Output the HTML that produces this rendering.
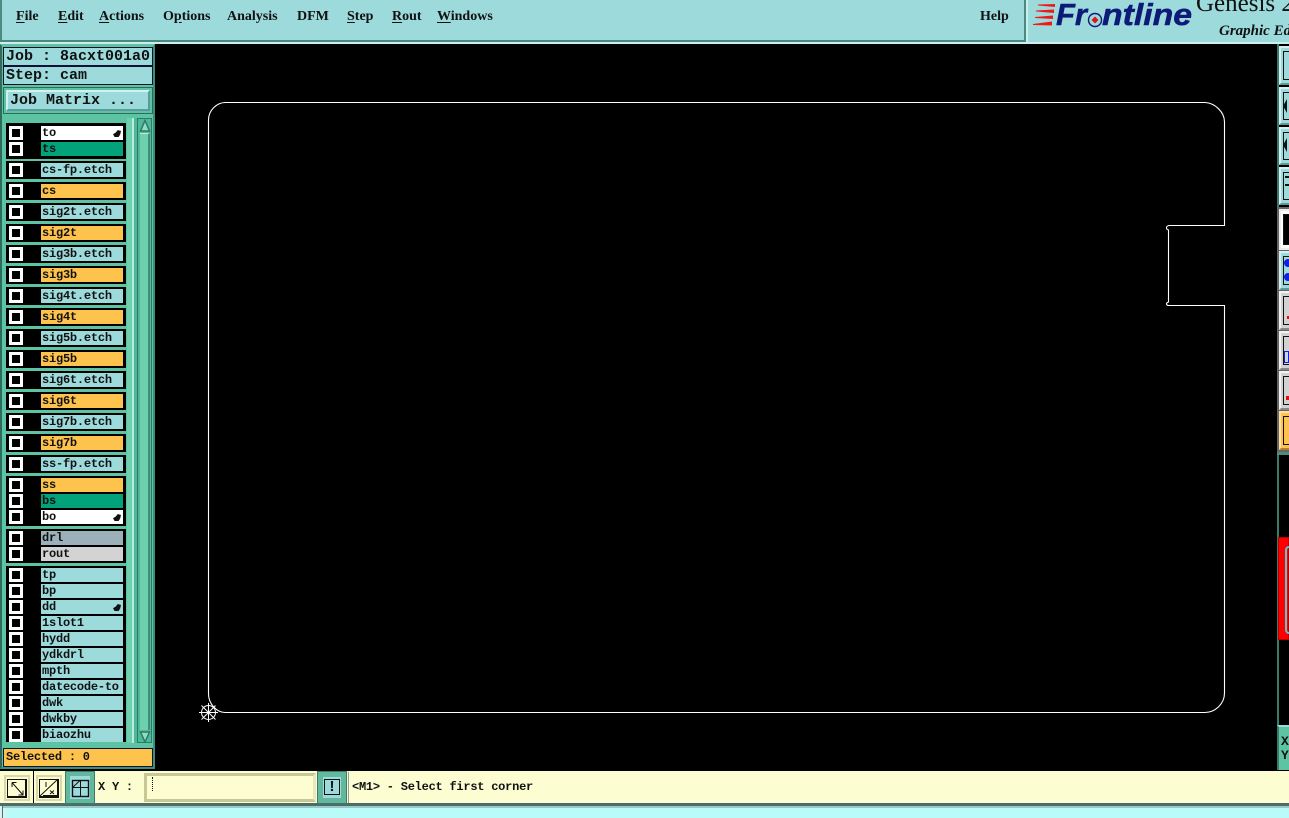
<!DOCTYPE html>
<html><head><meta charset="utf-8"><style>
html,body{margin:0;padding:0;background:#000;width:1289px;height:818px;overflow:hidden}
div,span{position:absolute;box-sizing:border-box}
.m{top:8px;font:bold 14px/17px "Liberation Serif",serif;color:#111;white-space:nowrap}
.m u{text-underline-offset:2px}
.mono{font-family:"Liberation Mono",monospace;font-weight:bold;color:#111;white-space:pre}
.g{left:6px;width:120px;background:#000}
.c{left:9px;width:14px;height:14px;background:#000;border:3px solid #fff}
.l{left:41px;width:82px;height:14px;font:bold 12px/14px "Liberation Mono",monospace;letter-spacing:-.22px;color:#111;padding-left:1px;background:#9ddadb;white-space:pre;overflow:hidden}
.o{background:#fec34c}.t{background:#02a27b}.w{background:#fff}
.h{left:72px;top:4px;width:8px;height:7px;background:#111;clip-path:polygon(0 60%,35% 35%,60% 0,100% 15%,90% 65%,70% 100%,20% 100%)}
.b{left:1279px;width:12px;border:2px solid;border-color:#d4f0f0 #5b9a9a #5b9a9a #d4f0f0;background:#9ddadb}
.b:after{content:"";position:absolute;left:2px;top:3px;bottom:3px;width:20px;border:1px solid #111}
.gr{background:#d2d2d2;border-color:#f2f2f2 #888 #888 #f2f2f2}
.ic{top:771px;width:32px;height:31px;background:#fdfdd2}
.fr{top:775px;width:26px;height:26px;border:2px solid #d8d8a8}
</style></head><body>
<!-- top bar -->
<div style="left:0;top:0;width:1289px;height:44px;background:#9ddadb"></div>
<div style="left:0;top:0;width:2px;height:42px;background:#4b8c80"></div>
<div style="left:0;top:40px;width:1026px;height:2px;background:#4a8a7e"></div>
<div style="left:1024px;top:0;width:2px;height:42px;background:#4a8a7e"></div>
<div style="left:1026px;top:0;width:2px;height:44px;background:#cdeeee"></div>
<div style="left:0;top:42px;width:1289px;height:2px;background:#cdeeee"></div>
<span class="m" style="left:16px"><u>F</u>ile</span>
<span class="m" style="left:58px"><u>E</u>dit</span>
<span class="m" style="left:99px"><u>A</u>ctions</span>
<span class="m" style="left:163px">O<u>p</u>tions</span>
<span class="m" style="left:227px">Analysis</span>
<span class="m" style="left:297px">DFM</span>
<span class="m" style="left:347px"><u>S</u>tep</span>
<span class="m" style="left:392px"><u>R</u>out</span>
<span class="m" style="left:437px"><u>W</u>indows</span>
<span class="m" style="left:980px">Help</span>
<!-- logo -->
<svg style="position:absolute;left:1033px;top:3px" width="24" height="24"><g fill="#f01818"><path d="M5 1.500L22 1V4L5 2.500Z"/><path d="M3 7.500L21 6.500V10L3 8.500Z"/><path d="M2 14L20 12.500V16L2 15Z"/><path d="M0 21L19 18.500V22.500L0 22Z"/></g></svg>
<span style="left:1056px;top:-4px;font:italic bold 31px/38px 'Liberation Sans',sans-serif;color:#0d1a78;-webkit-text-stroke:.5px #0d1a78;white-space:nowrap">Fr</span>
<span style="left:1102px;top:-4px;font:italic bold 31px/38px 'Liberation Sans',sans-serif;color:#0d1a78;-webkit-text-stroke:.5px #0d1a78;white-space:nowrap;transform-origin:0 0;transform:scaleX(1.09)">ntline</span>
<svg style="position:absolute;left:1086px;top:11px" width="18" height="18"><circle cx="9" cy="9" r="6.500" fill="none" stroke="#0d1a78" stroke-width="1.400"/><path d="M9 5.500l3.500 3.500-3.500 3.500-3.500-3.500z" fill="#e01414"/></svg>
<span style="left:1196px;top:-10px;font:25px/28px 'Liberation Serif',serif;color:#111;white-space:nowrap">Genesis 2</span>
<span style="left:1219px;top:23px;font:italic bold 15px/16px 'Liberation Serif',serif;color:#111;white-space:nowrap">Graphic Ed</span>
<!-- left panel -->
<div style="left:0;top:44px;width:155px;height:725px;background:#5cc4a3;border:2px solid;border-color:#5cc4a3 #3c8f78 #3c8f78 #2f6b5a"></div>
<div class="mono" style="left:3px;top:47px;width:150px;height:19px;background:#9ddadb;border:1px solid #113;font-size:15px;line-height:18px;padding-left:2px">Job : 8acxt001a0</div>
<div class="mono" style="left:3px;top:66px;width:150px;height:19px;background:#9ddadb;border:1px solid #113;font-size:15px;line-height:18px;padding-left:2px">Step: cam</div>
<div style="left:3px;top:87px;width:150px;height:27px;border:1px solid #2f6b5a;background:#5cc4a3"></div>
<div class="mono" style="left:6px;top:90px;width:144px;height:21px;background:#9ddadb;border:2px solid;border-color:#d4f0f0 #5b9a9a #5b9a9a #d4f0f0;font-size:15px;line-height:17px;padding-left:2px">Job Matrix ...</div>
<!-- groups -->
<div class="g" style="top:123px;height:36px"></div>
<div class="g" style="top:161px;height:18px"></div>
<div class="g" style="top:182px;height:18px"></div>
<div class="g" style="top:203px;height:18px"></div>
<div class="g" style="top:224px;height:18px"></div>
<div class="g" style="top:245px;height:18px"></div>
<div class="g" style="top:266px;height:18px"></div>
<div class="g" style="top:287px;height:18px"></div>
<div class="g" style="top:308px;height:18px"></div>
<div class="g" style="top:329px;height:18px"></div>
<div class="g" style="top:350px;height:18px"></div>
<div class="g" style="top:371px;height:18px"></div>
<div class="g" style="top:392px;height:18px"></div>
<div class="g" style="top:413px;height:18px"></div>
<div class="g" style="top:434px;height:18px"></div>
<div class="g" style="top:455px;height:18px"></div>
<div class="g" style="top:476px;height:50px"></div>
<div class="g" style="top:529px;height:34px"></div>
<div class="g" style="top:566px;height:176px"></div>
<div class="c" style="top:126px"></div><div class="l w" style="top:126px">to<span class="h"></span></div>
<div class="c" style="top:142px"></div><div class="l t" style="top:142px">ts</div>
<div class="c" style="top:163px"></div><div class="l" style="top:163px">cs-fp.etch</div>
<div class="c" style="top:184px"></div><div class="l o" style="top:184px">cs</div>
<div class="c" style="top:205px"></div><div class="l" style="top:205px">sig2t.etch</div>
<div class="c" style="top:226px"></div><div class="l o" style="top:226px">sig2t</div>
<div class="c" style="top:247px"></div><div class="l" style="top:247px">sig3b.etch</div>
<div class="c" style="top:268px"></div><div class="l o" style="top:268px">sig3b</div>
<div class="c" style="top:289px"></div><div class="l" style="top:289px">sig4t.etch</div>
<div class="c" style="top:310px"></div><div class="l o" style="top:310px">sig4t</div>
<div class="c" style="top:331px"></div><div class="l" style="top:331px">sig5b.etch</div>
<div class="c" style="top:352px"></div><div class="l o" style="top:352px">sig5b</div>
<div class="c" style="top:373px"></div><div class="l" style="top:373px">sig6t.etch</div>
<div class="c" style="top:394px"></div><div class="l o" style="top:394px">sig6t</div>
<div class="c" style="top:415px"></div><div class="l" style="top:415px">sig7b.etch</div>
<div class="c" style="top:436px"></div><div class="l o" style="top:436px">sig7b</div>
<div class="c" style="top:457px"></div><div class="l" style="top:457px">ss-fp.etch</div>
<div class="c" style="top:478px"></div><div class="l o" style="top:478px">ss</div>
<div class="c" style="top:494px"></div><div class="l t" style="top:494px">bs</div>
<div class="c" style="top:510px"></div><div class="l w" style="top:510px">bo<span class="h"></span></div>
<div class="c" style="top:531px"></div><div class="l" style="top:531px;background:#9cb0ba">drl</div>
<div class="c" style="top:547px"></div><div class="l" style="top:547px;background:#d3d3d3">rout</div>
<div class="c" style="top:568px"></div><div class="l" style="top:568px">tp</div>
<div class="c" style="top:584px"></div><div class="l" style="top:584px">bp</div>
<div class="c" style="top:600px"></div><div class="l" style="top:600px">dd<span class="h"></span></div>
<div class="c" style="top:616px"></div><div class="l" style="top:616px">1slot1</div>
<div class="c" style="top:632px"></div><div class="l" style="top:632px">hydd</div>
<div class="c" style="top:648px"></div><div class="l" style="top:648px">ydkdrl</div>
<div class="c" style="top:664px"></div><div class="l" style="top:664px">mpth</div>
<div class="c" style="top:680px"></div><div class="l" style="top:680px">datecode-to</div>
<div class="c" style="top:696px"></div><div class="l" style="top:696px">dwk</div>
<div class="c" style="top:712px"></div><div class="l" style="top:712px">dwkby</div>
<div class="c" style="top:728px"></div><div class="l" style="top:728px;height:14px">biaozhu</div>
<!-- scrollbar -->
<div style="left:127px;top:118px;width:7px;height:625px;background:#6fd0b0;border-right:2px solid #b8ecdc"></div>
<div style="left:134px;top:118px;width:3px;height:625px;background:#4fb898"></div>
<div style="left:137px;top:118px;width:15px;height:625px;background:#4fb898;border:1px solid #2f7a66"></div>
<div style="left:140px;top:133px;width:10px;height:597px;background:#6fd0b0;border-right:2px solid #3c8f78;border-top:1px solid #b8ecdc"></div>
<svg style="position:absolute;left:139px;top:119px" width="12" height="13"><path d="M6 1.500L10.500 12H1.500Z" fill="#8fdcc8" stroke="#2f7a66" stroke-width="1.500"/></svg>
<svg style="position:absolute;left:139px;top:731px" width="12" height="12"><path d="M6 11L10.500 1H1.500Z" fill="#8fdcc8" stroke="#2f7a66" stroke-width="1.500"/></svg>
<div class="mono" style="left:3px;top:748px;width:150px;height:19px;background:#fec34c;border:1px solid #113;font-size:12px;line-height:17px;padding-left:2px;letter-spacing:-.22px">Selected : 0</div>
<!-- canvas -->
<svg style="position:absolute;left:155px;top:44px" width="1122" height="726">
<path d="M70.500 58.500H1050C1060 59 1069.500 68 1069.500 78V181.500H1014C1011 182 1010.500 185 1013.500 186V258C1010.500 259 1011 261.500 1014 261.500H1069.500V649C1069.500 660 1060 668.500 1050 668.500H70C62 668.500 53.500 660 53.500 650V76C53.500 66 62 58.500 70.500 58.500Z" fill="none" stroke="#fff" stroke-width="1.100"/>
<g stroke="#fff" stroke-width="1" fill="none"><circle cx="53.500" cy="668.500" r="7"/><path d="M44 668.500H63M53.500 659V678M46.500 661.500L60.500 675.500M60.500 661.500L46.500 675.500"/></g>
</svg>
<!-- right side -->
<div style="left:1277px;top:44px;width:2px;height:726px;background:#3c7a6a"></div>
<div class="b" style="top:46px;height:39px"></div>
<div class="b" style="top:87px;height:38px"></div>
<div class="b" style="top:127px;height:38px"></div>
<div class="b" style="top:167px;height:38px"></div>
<svg style="position:absolute;left:1283px;top:95px" width="6" height="100"><path d="M0 11L4 4V18Z M0 50L4 43V57Z" fill="#111"/><path d="M2 82H6M2 90H6" stroke="#111" stroke-width="2"/></svg>
<div style="left:1277px;top:207px;width:12px;height:245px;background:#666"></div>
<div class="b" style="top:209px;height:41px;background:#fff;border-color:#eee"></div>
<div style="left:1284px;top:215px;width:5px;height:29px;background:#000"></div>
<div class="b" style="top:251px;height:39px"></div>
<svg style="position:absolute;left:1283px;top:256px" width="6" height="30"><circle cx="5" cy="7" r="4" fill="#1020e0"/><circle cx="5" cy="21" r="4" fill="#1020e0"/></svg>
<div class="b gr" style="top:291px;height:39px"></div>
<div class="b gr" style="top:331px;height:39px"></div>
<div class="b gr" style="top:371px;height:39px"></div>
<div class="b" style="top:411px;height:39px;background:#fec34c;border-color:#ffe0a0 #b08030 #b08030 #ffe0a0"></div>
<div style="left:1287px;top:316px;width:2px;height:3px;background:#e01010"></div>
<div style="left:1284px;top:351px;width:5px;height:12px;border:1px solid #1020e0"></div>
<div style="left:1286px;top:396px;width:3px;height:4px;background:#e01010"></div>
<div style="left:1277px;top:452px;width:12px;height:3px;background:#4b8c80"></div>
<div style="left:1278px;top:537px;width:11px;height:103px;background:#ff0000;border:1px solid #b00"></div>
<div style="left:1285px;top:546px;width:8px;height:88px;border:2px solid #55c8d8;border-radius:4px 0 0 4px"></div>
<div style="left:1277px;top:725px;width:12px;height:45px;background:#5cc4a3;border-top:2px solid #9ddadb;border-left:2px solid #3c7a6a"></div>
<span class="mono" style="left:1281px;top:734px;font-size:13px;line-height:15px">X</span>
<span class="mono" style="left:1281px;top:748px;font-size:13px;line-height:15px">Y</span>
<!-- bottom -->
<div style="left:0;top:771px;width:1289px;height:32px;background:#fdfdd2"></div>
<div style="left:0;top:803px;width:1289px;height:3px;background:#4b6f68"></div>
<div style="left:0;top:806px;width:1289px;height:12px;background:#d8f4f2"></div>
<div style="left:2px;top:806px;width:1287px;height:2px;background:#9cc8c8"></div>
<div style="left:2px;top:806px;width:1px;height:12px;background:#4b6f68"></div>
<div style="left:6px;top:808px;width:1283px;height:10px;background:#b8fbf8"></div>
<div class="ic" style="left:0"></div>
<div style="left:33px;top:771px;width:1px;height:32px;background:#000"></div>
<div class="ic" style="left:34px;width:31px"></div>
<div class="fr" style="left:4px"></div>
<div class="fr" style="left:36px"></div>
<div style="left:7px;top:779px;width:20px;height:19px;border:1px solid #111;border-width:1px 2px 2px 1px"></div>
<div style="left:39px;top:779px;width:20px;height:19px;border:1px solid #111;border-width:1px 2px 2px 1px"></div>
<div style="left:65px;top:771px;width:30px;height:33px;background:#9ddadb;border:5px solid #62b79f;outline:1px solid #3c7a6a;outline-offset:-1px"></div>
<svg style="position:absolute;left:0;top:771px" width="96" height="33"><g fill="none" stroke="#111" stroke-width="1"><path d="M12 11.500V16M12 11.500H16.500M12 11.500L23 24M23 19.500V24H18.500"/><path d="M40 25L58 8M46 11V16M43 24.500H57M50 19.500L54 23M54 19.500L50 23"/><rect x="72.500" y="9.500" width="16" height="16" stroke-width="1.400"/><path d="M80.500 9.500V25.500M72.500 16.500H88.500M72.500 16.500L80 9.500"/></g></svg>
<span class="mono" style="left:98px;top:780px;font-size:12px;line-height:15px;letter-spacing:-.22px">X Y :</span>
<div style="left:144px;top:773px;width:172px;height:29px;background:#fdfdd2;border:3px solid #c8c896;border-right-color:#e8e8bd"></div>
<div style="left:152px;top:777px;width:2px;height:14px;border-left:1px dotted #111"></div>
<div style="left:317px;top:771px;width:30px;height:33px;background:#9ddadb;border:6px solid #62b79f;outline:1px solid #3c7a6a;outline-offset:-1px"></div>
<div style="left:324px;top:779px;width:16px;height:16px;border:1px solid #111"></div>
<span style="left:326px;top:778px;width:12px;text-align:center;font:bold 15px/17px 'Liberation Sans',sans-serif;color:#111">!</span>
<div style="left:348px;top:772px;width:1px;height:31px;background:#999"></div>
<span class="mono" style="left:352px;top:780px;font-size:12px;line-height:14px;letter-spacing:-.24px">&lt;M1&gt; - Select first corner</span>
</body></html>
